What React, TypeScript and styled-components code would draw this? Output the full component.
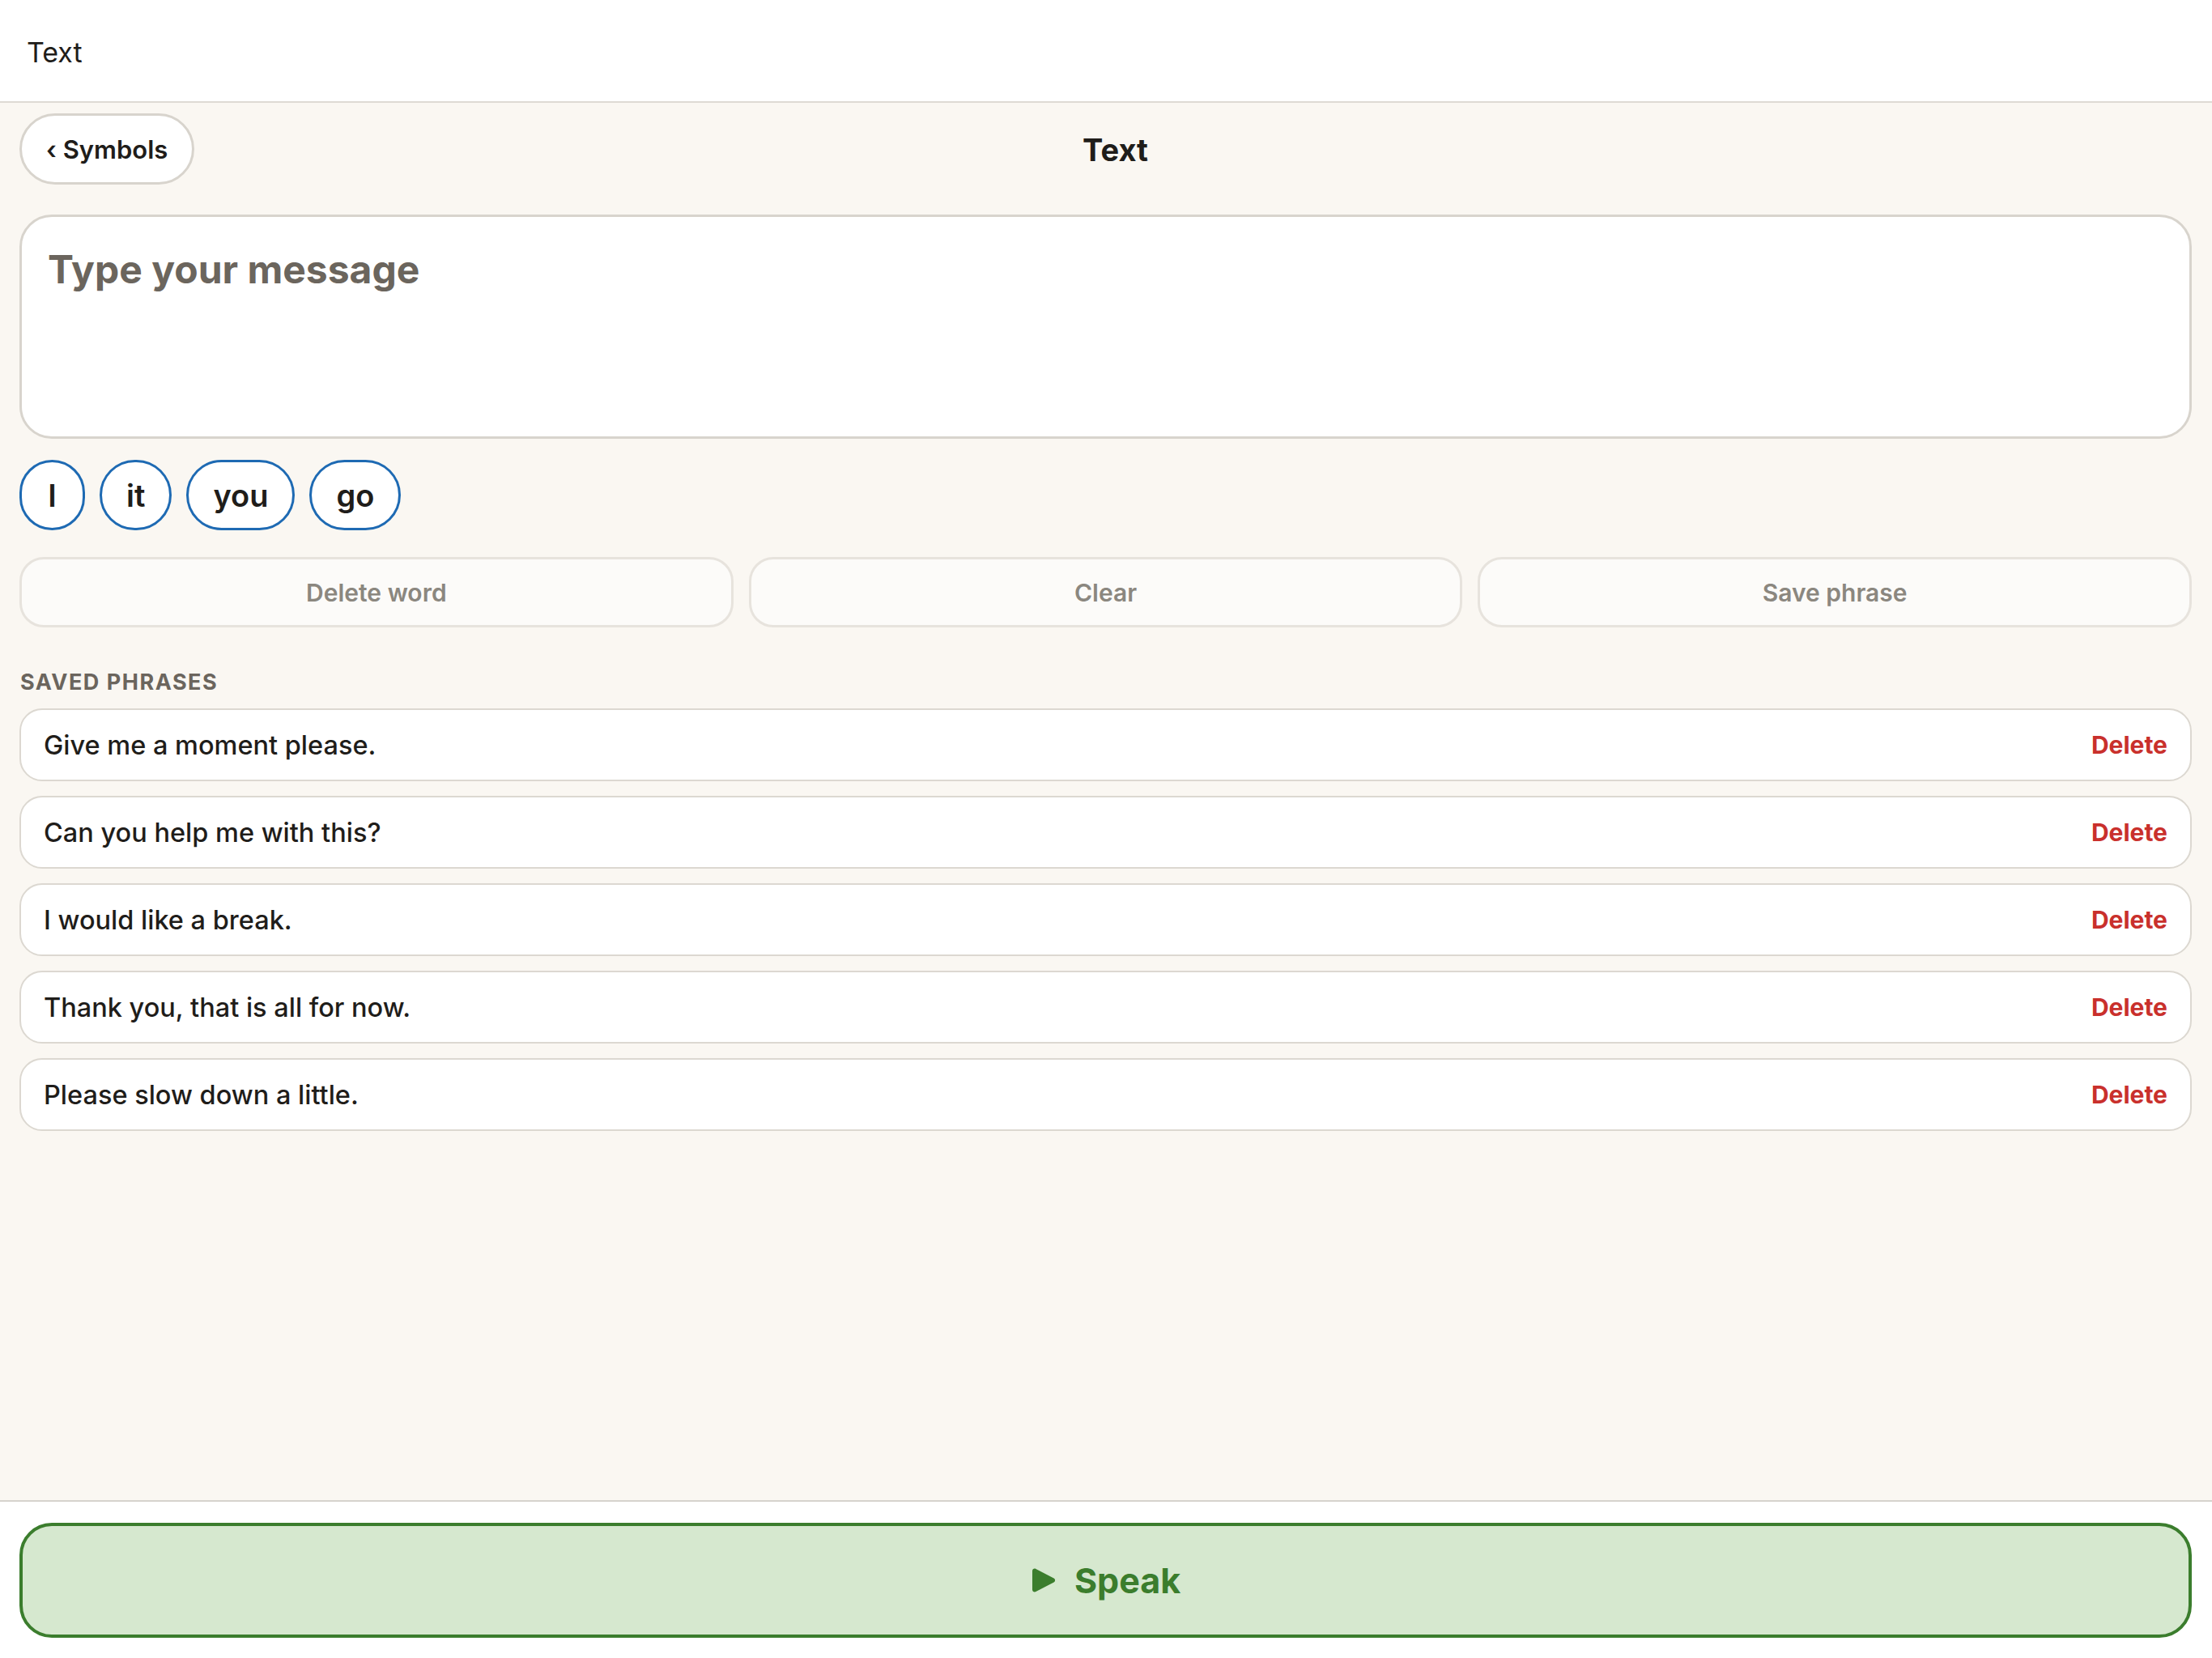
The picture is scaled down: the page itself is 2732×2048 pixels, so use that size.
import React from 'react';
import styled, { createGlobalStyle } from 'styled-components';

const ink = '#1f1d1a';
const page = '#faf7f2';
const line = '#d8d4cd';

const phrases = [
  'Give me a moment please.',
  'Can you help me with this?',
  'I would like a break.',
  'Thank you, that is all for now.',
  'Please slow down a little.',
];

const suggestions = ['I', 'it', 'you', 'go'];

const PlayIcon: React.FC = () => (
  <svg width='32' height='32' viewBox='0 0 32 32' aria-hidden='true'>
    <path
      d='M2 4.6C2 2.3 4.4.9 6.4 2l22.2 11.4c2 1.1 2 4 0 5.1L6.4 30C4.4 31.1 2 29.7 2 27.4z'
      fill='currentColor'
    />
  </svg>
);

const App: React.FC = () => (
  <>
    <GlobalStyle />
    <Screen>
      <TopBar>Text</TopBar>

      <Main>
        <Header>
          <BackButton type='button'>‹ Symbols</BackButton>
          <Title>Text</Title>
          <span />
        </Header>

        <Composer placeholder='Type your message' />

        <Chips>
          {suggestions.map((word) => (
            <Chip key={word} type='button'>
              {word}
            </Chip>
          ))}
        </Chips>

        <Actions>
          <ActionButton type='button'>Delete word</ActionButton>
          <ActionButton type='button'>Clear</ActionButton>
          <ActionButton type='button'>Save phrase</ActionButton>
        </Actions>

        <SectionLabel>Saved phrases</SectionLabel>

        <PhraseList>
          {phrases.map((phrase) => (
            <PhraseRow key={phrase}>
              <PhraseText>{phrase}</PhraseText>
              <DeleteLink type='button'>Delete</DeleteLink>
            </PhraseRow>
          ))}
        </PhraseList>
      </Main>

      <Footer>
        <SpeakButton type='button'>
          <PlayIcon />
          Speak
        </SpeakButton>
      </Footer>
    </Screen>
  </>
);

export default App;

const GlobalStyle = createGlobalStyle`
  * {
    box-sizing: border-box;
  }

  body {
    margin: 0;
    background: ${page};
    color: ${ink};
    font-family: Inter, 'Noto Sans', 'Liberation Sans', sans-serif;
  }

  button,
  textarea {
    font-family: inherit;
  }
`;

const Screen = styled.div`
  display: flex;
  flex-direction: column;
  height: 100vh;
`;

const TopBar = styled.header`
  display: flex;
  align-items: center;
  height: 127px;
  padding: 4px 33px 0;
  background: #fff;
  border-bottom: 2px solid #dedad4;
  font-size: 34px;
  font-weight: 400;
`;

const Main = styled.main`
  flex: 1;
  display: flex;
  flex-direction: column;
  padding: 13px 25px 0 24px;
`;

const Header = styled.div`
  display: grid;
  grid-template-columns: 1fr auto 1fr;
  align-items: center;
`;

const BackButton = styled.button`
  justify-self: start;
  height: 88px;
  padding: 0 30px;
  background: #fff;
  border: 3px solid ${line};
  border-radius: 44px;
  color: ${ink};
  font-size: 31px;
  font-weight: 600;
`;

const Title = styled.h1`
  margin: 2px 0 0 24px;
  font-size: 38px;
  font-weight: 700;
`;

const Composer = styled.textarea`
  display: block;
  height: 277px;
  margin-top: 37px;
  padding: 36px 32px;
  background: #fff;
  border: 3px solid ${line};
  border-radius: 40px;
  resize: none;
  outline: none;
  color: ${ink};
  font-size: 48px;
  font-weight: 700;
  line-height: 1.2;

  &::placeholder {
    color: #6b655d;
  }
`;

const Chips = styled.div`
  display: flex;
  gap: 18px;
  margin-top: 26px;
`;

const Chip = styled.button`
  height: 87px;
  min-width: 81px;
  padding: 0 30px;
  background: #fff;
  border: 3px solid #1e6ab3;
  border-radius: 44px;
  color: ${ink};
  font-size: 38px;
  font-weight: 600;
`;

const Actions = styled.div`
  display: grid;
  grid-template-columns: repeat(3, 1fr);
  gap: 19px;
  margin-top: 33px;
`;

const ActionButton = styled.button`
  height: 87px;
  background: #fcfbf9;
  border: 3px solid #e7e3dd;
  border-radius: 30px;
  color: #8b877f;
  font-size: 30px;
  font-weight: 600;
`;

const SectionLabel = styled.h2`
  margin: 52px 0 16px 1px;
  color: #6b655d;
  font-size: 27px;
  font-weight: 700;
  line-height: 32px;
  letter-spacing: 1.5px;
  text-transform: uppercase;
`;

const PhraseList = styled.div`
  display: flex;
  flex-direction: column;
  gap: 18px;
`;

const PhraseRow = styled.div`
  display: flex;
  align-items: center;
  justify-content: space-between;
  height: 90px;
  padding: 0 28px;
  background: #fff;
  border: 2px solid #dcd8d1;
  border-radius: 28px;
`;

const PhraseText = styled.span`
  font-size: 32.5px;
  font-weight: 500;
`;

const DeleteLink = styled.button`
  padding: 0;
  background: none;
  border: 0;
  color: #c9302c;
  font-size: 30px;
  font-weight: 700;
`;

const Footer = styled.footer`
  padding: 26px 25px 25px 24px;
  background: #fff;
  border-top: 2px solid #d6d3cd;
`;

const SpeakButton = styled.button`
  display: flex;
  align-items: center;
  justify-content: center;
  gap: 22px;
  width: 100%;
  height: 142px;
  background: #d6e8cf;
  border: 4px solid #3b7d2d;
  border-radius: 40px;
  color: #3b7d2d;
  font-size: 43px;
  font-weight: 700;
`;
